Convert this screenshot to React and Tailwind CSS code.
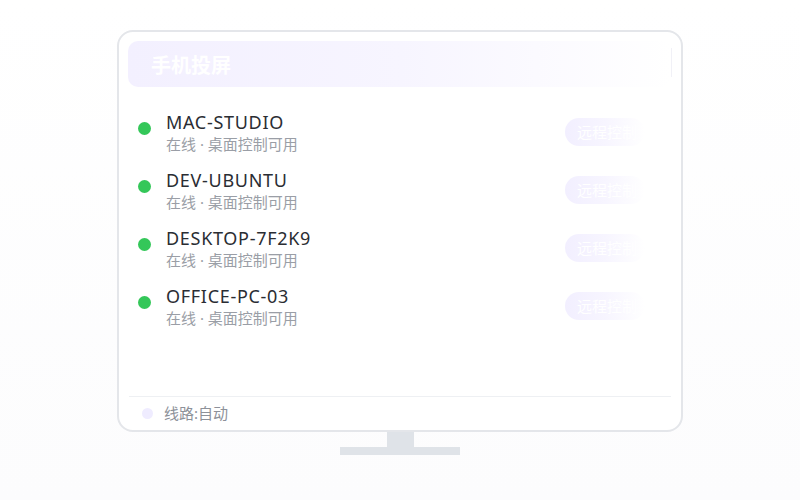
const devices = ['MAC-STUDIO', 'DEV-UBUNTU', 'DESKTOP-7F2K9', 'OFFICE-PC-03'];

const font = { fontFamily: '"Noto Sans", "Noto Sans CJK SC", sans-serif' };

export default function App() {
  return (
    <div
      className="w-[800px] h-[500px] bg-gradient-to-b from-white to-[#fcfcfd] flex flex-col items-center pt-[30px]"
      style={font}
    >
      {/* Screen */}
      <div className="w-[566px] h-[402px] border-2 border-[#e4e6ea] rounded-[16px] bg-white flex flex-col">
        <div className="mx-[9px] mt-[9px] h-[46px] rounded-[10px] bg-gradient-to-r from-[#f3f0ff] via-[#f7f5ff] to-white flex items-center pl-[23px] pt-[3px] relative">
          <span className="text-white font-bold text-[20px] leading-none">手机投屏</span>
          <div className="absolute right-0 top-[7px] bottom-[10px] w-px bg-[#f1f1f7]" />
        </div>

        <div className="flex-1 flex flex-col gap-[14px] pt-[23px]">
          {devices.map((name) => (
            <div key={name} className="flex items-center pl-[19px]">
              <div className="self-start mt-[12px] w-[13px] h-[13px] rounded-full bg-[#34c759]" />
              <div className="ml-[15px] flex flex-col">
                <span className="text-[18px] leading-[24px] text-[#2a2d33] tracking-[0.7px]">{name}</span>
                <span className="text-[15px] leading-[20px] text-[#9a9ea6]">在线 · 桌面控制可用</span>
              </div>
              <div className="ml-auto mr-[36px] w-[80px] h-[28px] rounded-full bg-gradient-to-r from-[#f2efff] via-[#f7f5ff] to-white flex items-center pl-[12px]">
                <span className="text-white text-[15px]">远程控制</span>
              </div>
            </div>
          ))}
        </div>

        <div className="mx-[10px] h-[34px] border-t border-[#eef0f3] flex items-center pl-[13px]">
          <div className="w-[11px] h-[11px] rounded-full bg-[#efecff]" />
          <span className="ml-[11px] text-[15px] text-[#8d9199]">线路:自动</span>
        </div>
      </div>

      {/* Stand */}
      <div className="w-[27px] h-[15px] bg-[#dfe3e8]" />
      <div className="w-[120px] h-[8px] bg-[#dfe3e8]" />
    </div>
  );
}
